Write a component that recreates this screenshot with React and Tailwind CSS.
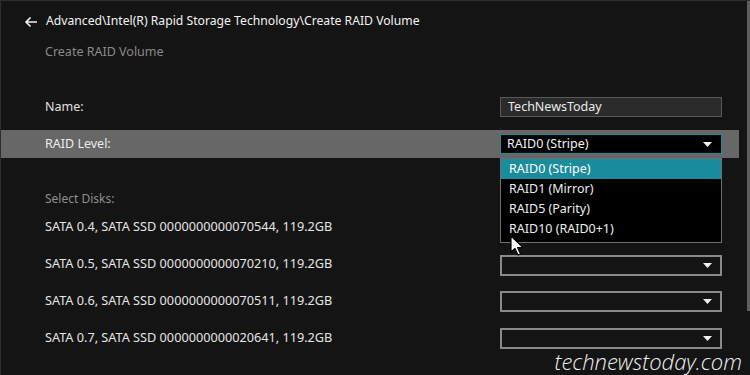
import React from "react";

const disks = [
  "SATA 0.4, SATA SSD 0000000000070544, 119.2GB",
  "SATA 0.5, SATA SSD 0000000000070210, 119.2GB",
  "SATA 0.6, SATA SSD 0000000000070511, 119.2GB",
  "SATA 0.7, SATA SSD 0000000000020641, 119.2GB",
];

function Caret() {
  return (
    <svg width="9" height="5" viewBox="0 0 9 5" className="shrink-0">
      <path d="M0 0 H9 L4.5 5 Z" fill="#f2f2f2" />
    </svg>
  );
}

export default function App() {
  return (
    <div
      className="relative w-[750px] h-[375px] overflow-hidden bg-[#141414] border-t border-l border-[#2e2e2e] text-[#e2e2e2]"
      style={{ fontFamily: '"Noto Sans", "Open Sans", sans-serif' }}
    >
      {/* header */}
      <div className="flex items-center h-[41px] pl-[23px]">
        <svg width="14" height="12" viewBox="0 0 14 12" className="mr-[8px]">
          <path d="M13 6 H2 M6.5 1.5 L2 6 L6.5 10.5" stroke="#f2f2f2" strokeWidth="1.6" fill="none" />
        </svg>
        <span className="text-[12.2px] text-[#f2f2f2] leading-none">
          Advanced\Intel(R) Rapid Storage Technology\Create RAID Volume
        </span>
      </div>
      <div className="flex items-center h-[20px] pl-[44px] text-[12.5px] text-[#8a8a8a]">
        Create RAID Volume
      </div>

      {/* Name */}
      <div className="mt-[35px] flex items-center h-[20px]">
        <div className="w-[499px] pl-[44px] text-[12.5px] text-[#e0e0e0]">Name:</div>
        <div className="w-[222px] h-[20px] bg-[#2b2b2b] border border-[#595959] flex items-center pl-[7px] text-[12.5px] text-[#ececec]">
          TechNewsToday
        </div>
      </div>

      {/* RAID level (highlighted) */}
      <div className="mt-[13px] flex items-center h-[28px] w-[738px] bg-[#676767]">
        <div className="w-[499px] pl-[44px] text-[12.5px] text-[#ececec]">RAID Level:</div>
        <div className="w-[222px] h-[20px] bg-black border border-[#1b8c9b] flex items-center justify-between pl-[6px] pr-[9px] text-[12.5px] text-[#f2f2f2]">
          <span>RAID0 (Stripe)</span>
          <Caret />
        </div>
      </div>

      {/* Select disks */}
      <div className="mt-[31px] flex items-center h-[20px] pl-[44px] text-[12px] text-[#8f8f8f]">
        Select Disks:
      </div>

      <div className="mt-[8px] flex flex-col gap-[16.7px]">
        {disks.map((d) => (
          <div key={d} className="flex items-center h-[20px]">
            <div className="w-[499px] pl-[44px] text-[12.7px] text-[#e4e4e4]">{d}</div>
            <div className="w-[222px] h-[21px] mt-[3px] border-2 border-[#8a8a8a] flex items-center justify-end pr-[8px]">
              <Caret />
            </div>
          </div>
        ))}
      </div>

      {/* dropdown list */}
      <div className="absolute left-[499px] top-[157px] w-[222px] h-[85px] bg-black border border-[#6f6f6f] text-[12.5px] text-[#ececec] flex flex-col">
        <div className="h-[20px] bg-[#1b8c9b] flex items-center pl-[8px] text-white">RAID0 (Stripe)</div>
        <div className="h-[20px] flex items-center pl-[8px]">RAID1 (Mirror)</div>
        <div className="h-[20px] flex items-center pl-[8px]">RAID5 (Parity)</div>
        <div className="h-[20px] flex items-center pl-[8px]">RAID10 (RAID0+1)</div>
      </div>

      {/* cursor */}
      <svg className="absolute left-[509px] top-[234px]" width="16" height="22" viewBox="0 0 16 22">
        <path d="M1 1 L1 17 L5 13.5 L8 20 L10.5 19 L7.6 12.6 L13 12.6 Z" fill="#ffffff" stroke="#000" strokeWidth="1.2" strokeLinejoin="round" />
      </svg>

      {/* scrollbar */}
      <div className="absolute right-0 top-0 w-[3px] h-[310px] bg-[#5e5e5e]" />

      {/* watermark */}
      <div
        className="absolute right-[8px] bottom-[3px] text-[22px] italic font-light text-[#f0f0f0] leading-none"
        style={{ fontFamily: '"Open Sans", sans-serif' }}
      >
        technewstoday.com
      </div>
    </div>
  );
}
